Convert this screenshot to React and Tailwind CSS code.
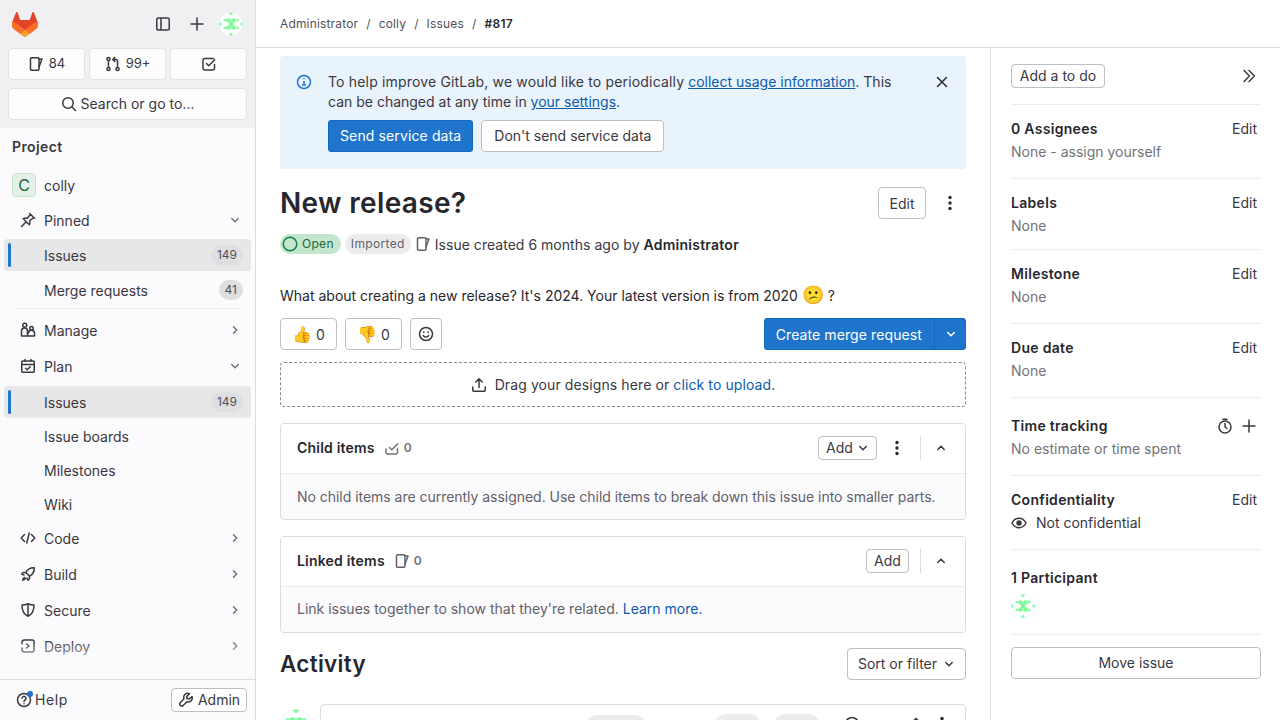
import React from 'react';

const Ico = ({ size = 16, vb = 16, className = '', children }) => (
  <svg width={size} height={size} viewBox={`0 0 ${vb} ${vb}`} fill="none" stroke="currentColor" strokeWidth="1.5" strokeLinecap="round" strokeLinejoin="round" className={`shrink-0 ${className}`}>
    {children}
  </svg>
);

const IssuesIcon = (p) => (
  <Ico {...p}>
    <path d="M3.500 1.750h6.500a1 1 0 0 1 1 1v10.500a1 1 0 0 1-1 1H3.500a1 1 0 0 1-1-1V2.750a1 1 0 0 1 1-1z" />
    <path d="M11 3h3l-3 8" />
  </Ico>
);
const MergeIcon = (p) => (
  <Ico {...p}>
    <circle cx="3.500" cy="3" r="1.600" />
    <circle cx="3.500" cy="13" r="1.600" />
    <circle cx="12.500" cy="13" r="1.600" />
    <path d="M3.500 4.600v6.800M12.500 11.400V5.500a2 2 0 0 0-2-2H8M9.800 1.500 7.800 3.500l2 2" />
  </Ico>
);
const TodoIcon = (p) => (
  <Ico {...p}>
    <path d="M13.500 8.500v4a1.500 1.500 0 0 1-1.500 1.500H3.500A1.500 1.500 0 0 1 2 12.500V4a1.500 1.500 0 0 1 1.500-1.500h9" />
    <path d="m5.500 7.500 2.200 2.200 6-6" />
  </Ico>
);
const SearchIcon = (p) => (
  <Ico {...p}>
    <circle cx="7" cy="7" r="5.250" />
    <path d="m11 11 3.500 3.500" />
  </Ico>
);
const PlusIcon = (p) => (
  <Ico {...p}>
    <path d="M8 2v12M2 8h12" />
  </Ico>
);
const PanelIcon = (p) => (
  <Ico {...p}>
    <rect x="1.750" y="2" width="12.500" height="12" rx="1.750" />
    <path d="M6 2.500v11" />
  </Ico>
);
const ChevronDown = (p) => (
  <Ico size={12} vb={12} {...p}>
    <path d="M2.750 4.500 6 7.750 9.250 4.500" />
  </Ico>
);
const ChevronRight = (p) => (
  <Ico size={12} vb={12} {...p}>
    <path d="M4.500 2.750 7.750 6 4.500 9.250" />
  </Ico>
);
const ChevronUp = (p) => (
  <Ico size={12} vb={12} {...p}>
    <path d="M2.750 7.500 6 4.250 9.250 7.500" />
  </Ico>
);
const Dots = ({ className = '' }) => (
  <svg width="16" height="16" viewBox="0 0 16 16" fill="currentColor" className={`shrink-0 ${className}`}>
    <circle cx="8" cy="2.500" r="1.700" />
    <circle cx="8" cy="8" r="1.700" />
    <circle cx="8" cy="13.500" r="1.700" />
  </svg>
);

const Tanuki = () => (
  <svg width="26" height="25" viewBox="0 0 25 24">
    <path d="m24.507 9.500-.034-.09L21.082.562a.896.896 0 0 0-1.694.091l-2.290 7.010H7.825L5.535.653a.898.898 0 0 0-1.694-.09L.451 9.411.416 9.500a6.297 6.297 0 0 0 2.090 7.278l.012.010.03.022 5.160 3.867 2.560 1.935 1.554 1.176a1.051 1.051 0 0 0 1.268 0l1.555-1.176 2.560-1.935 5.197-3.890.014-.01A6.297 6.297 0 0 0 24.507 9.500z" fill="#E24329" />
    <path d="m24.507 9.500-.034-.09a11.440 11.440 0 0 0-4.560 2.051l-7.447 5.632 4.742 3.584 5.197-3.890.014-.01A6.297 6.297 0 0 0 24.507 9.500z" fill="#FC6D26" />
    <path d="m7.707 20.677 2.560 1.935 1.555 1.176a1.051 1.051 0 0 0 1.268 0l1.555-1.176 2.560-1.935-4.743-3.584-4.755 3.584z" fill="#FCA326" />
    <path d="M5.010 11.461a11.430 11.430 0 0 0-4.560-2.050L.416 9.500a6.297 6.297 0 0 0 2.090 7.278l.012.010.03.022 5.160 3.867 4.745-3.584-7.444-5.632z" fill="#FC6D26" />
  </svg>
);

// 5 dots in the middle, small triangles round the edge
const Identicon = ({ size = 24 }) => (
  <svg width={size} height={size} viewBox="0 0 24 24" className="shrink-0 rounded-full bg-white">
    <circle cx="12" cy="12" r="11.800" fill="#fff" stroke="#e6e6e9" strokeWidth=".4" />
    <g fill="#7dfa9b">
      <circle cx="9.500" cy="8.500" r="2.300" />
      <circle cx="14.500" cy="8.500" r="2.300" />
      <circle cx="12" cy="12" r="2.300" />
      <circle cx="9.500" cy="15.500" r="2.300" />
      <circle cx="14.500" cy="15.500" r="2.300" />
      <path d="M9.500.500h5L12 3.500zM9.500 23.500h5L12 20.500zM.500 9.500l2.500 2.500-2.500 2.500zM23.500 9.500 21 12l2.500 2.500zM4 7h3.500L6 10zM16.500 7H20l-2 3zM4 17h3.500L6 14zM16.500 17H20l-2-3z" />
    </g>
  </svg>
);

const NavRow = ({ icon, label, chevron, count, active, className = '' }) => (
  <div className={`relative mx-1 flex h-8 items-center rounded-[4px] pr-2 text-[14px] text-[#3a383f] ${active ? 'bg-[#e7e6e9]' : ''} ${className}`}>
    {active && <span className="absolute left-1 top-1 h-6 w-[3px] rounded-sm bg-[#1f75cb]" />}
    <span className="flex w-10 justify-center pl-[8px] text-[#3a383f]">{icon}</span>
    <span className="flex-1 truncate">{label}</span>
    {count && <span className="flex h-5 items-center rounded-full bg-[#dfdfe2] px-[6px] text-[12px] text-[#535158]">{count}</span>}
    {chevron === 'down' && <ChevronDown className="mr-[2px] text-[#737278]" />}
    {chevron === 'right' && <ChevronRight className="mr-[2px] text-[#737278]" />}
  </div>
);

const Btn = ({ children, className = '' }) => (
  <div className={`flex items-center justify-center rounded-[4px] border border-[#bfbfc3] bg-white text-[14px] text-[#3a383f] ${className}`}>{children}</div>
);

const SideSection = ({ title, action = 'Edit', children, className = '' }) => (
  <div className={`border-b border-[#ececef] ${className}`}>
    <div className="flex items-center justify-between">
      <span className="text-[14px] font-semibold leading-5 tracking-[0.3px] text-[#28272d]">{title}</span>
      {typeof action === 'string' ? <span className="pr-1 text-[14px] leading-5 text-[#3a383f]">{action}</span> : action}
    </div>
    <div className="mt-[3px] text-[14px] leading-5 text-[#737278]">{children}</div>
  </div>
);

const Sidebar = () => (
  <aside className="relative flex h-screen w-[256px] shrink-0 flex-col overflow-hidden border-r border-[#dcdcde] bg-[#fbfafd]">
    <div className="h-[128px] shrink-0 bg-[#f0f0f2] px-2">
      <div className="flex h-12 items-center">
        <div className="ml-[4px] flex-1"><Tanuki /></div>
        <PanelIcon className="mr-[18px] text-[#3a383f]" />
        <PlusIcon className="mr-[14px] text-[#3a383f]" />
        <Identicon />
        <span className="w-1" />
      </div>
      <div className="grid grid-cols-3 gap-1">
        <div className="flex h-8 items-center justify-center gap-[5px] rounded-[4px] border border-[#e3e3e6] bg-[#fdfdfe] text-[13px] text-[#3a383f]"><IssuesIcon />84</div>
        <div className="flex h-8 items-center justify-center gap-[5px] rounded-[4px] border border-[#e3e3e6] bg-[#fdfdfe] text-[13px] text-[#3a383f]"><MergeIcon />99+</div>
        <div className="flex h-8 items-center justify-center rounded-[4px] border border-[#e3e3e6] bg-[#fdfdfe] text-[#3a383f]"><TodoIcon /></div>
      </div>
      <div className="mt-2 flex h-8 items-center justify-center gap-[4px] rounded-[4px] border border-[#e3e3e6] bg-[#fdfdfe] pb-[1px] text-[14px] text-[#3a383f]"><SearchIcon />Search or go to…</div>
    </div>
    <nav className="flex-1">
      <div className="flex h-[37px] items-center px-3 text-[14px] font-semibold tracking-[0.4px] text-[#3a383f]">Project</div>
      <div className="mt-1 flex h-8 items-center text-[14px] text-[#3a383f]">
        <span className="ml-3 mr-2 flex h-6 w-6 items-center justify-center rounded-[4px] border border-[#c9e5d2] bg-[#e3f1e8] text-[16px] text-[#24663b]">C</span>colly
      </div>
      <NavRow className="mt-[3px]" label="Pinned" chevron="down" icon={<Ico><path d="m9.750 1.500 4.750 4.750M10.500 2.250 7.250 6.250C5.500 5.750 4.250 6 3.250 6.750l6 6c.750-1 1-2.250.500-4l4-3.250M6 10l-4.500 4.500" /></Ico>} />
      <NavRow className="mt-[3px]" label="Issues" count="149" active />
      <NavRow className="mt-[3px]" label="Merge requests" count="41" />
      <div className="mx-4 mt-[2px] h-px bg-[#ececef]" />
      <NavRow className="mt-[5px]" label="Manage" chevron="right" icon={<Ico><circle cx="4.750" cy="3.250" r="2" /><path d="M1.500 14V9a3 3 0 0 1 6 0v5zM7.500 14h7v-2.500a3 3 0 0 0-6-.500" /><circle cx="11.500" cy="6.250" r="1.750" /></Ico>} />
      <NavRow className="mt-1" label="Plan" chevron="down" icon={<Ico><rect x="1.750" y="3" width="12.500" height="11.250" rx="1" /><path d="M1.750 6.500h12.500M5 1.500V3M11 1.500V3M5.500 10.250l1.750 1.500 3-3" /></Ico>} />
      <NavRow className="mt-1" label="Issues" count="149" active />
      <NavRow className="mt-[2px]" label="Issue boards" />
      <NavRow className="mt-[2px]" label="Milestones" />
      <NavRow className="mt-[2px]" label="Wiki" />
      <NavRow className="mt-[2px]" label="Code" chevron="right" icon={<Ico><path d="M4.500 4.500 1.250 8l3.250 3.500M11.500 4.500 14.750 8l-3.250 3.500M9.250 3l-2.500 10" /></Ico>} />
      <NavRow className="mt-1" label="Build" chevron="right" icon={<Ico><path d="M14.250 1.750c-4-.250-6.500 1.250-8.500 4.750l3.750 3.750c3.500-2 5-4.500 4.750-8.500zM5.750 6.500H3.250L1.750 8l2.250 1M9.500 10.250v2.500L8 14.250 7 12M4.500 11.500c-1 .500-1.500 1.500-1.750 2.750 1.250-.250 2.250-.750 2.750-1.750" /></Ico>} />
      <NavRow className="mt-1" label="Secure" chevron="right" icon={<Ico><path d="M8 1.750c2 1 4 1.250 6 1.250 0 5.500-1.500 9.250-6 11.250C3.500 12.250 2 8.500 2 3c2 0 4-.250 6-1.250zM8 2v12" /></Ico>} />
      <NavRow className="mt-1" label="Deploy" chevron="right" icon={<Ico><path d="M2 6V4.500A2.500 2.500 0 0 1 4.500 2h8a1.500 1.500 0 0 1 1.500 1.500v9a1.500 1.500 0 0 1-1.500 1.500h-8A2.500 2.500 0 0 1 2 11.500V10M6.500 6 9 8l-2.500 2" /></Ico>} />
      <NavRow className="mt-1" label="Operate" chevron="right" icon={<Ico><circle cx="8" cy="8" r="6.250" /></Ico>} />
    </nav>
    <div className="pointer-events-none absolute bottom-[40px] left-0 h-[40px] w-full bg-gradient-to-t from-[#fbfafd] from-20% to-transparent" />
    <div className="absolute bottom-0 left-0 flex h-[41px] w-full items-center justify-between border-t border-[#dcdcde] bg-[#fbfafd] pl-4 pr-2">
      <div className="flex items-center gap-[3px] pb-[1px] text-[14px] tracking-[0.6px] text-[#3a383f]">
        <span className="relative">
          <Ico><circle cx="8" cy="8" r="6.500" /><path d="M6 6.250a2 2 0 1 1 3 1.750c-.700.400-1 .800-1 1.500M8 11.750v.010" /></Ico>
          <span className="absolute -right-[1px] -top-[1px] h-[6px] w-[6px] rounded-full bg-[#1f75cb]" />
        </span>
        Help
      </div>
      <Btn className="h-6 w-[76px] gap-1 pb-[1px]"><Ico><path d="M14 4.500 11.250 7 9 6.750 8.750 4.500 11.500 1.750A4 4 0 0 0 6 6.750L2 11a2 2 0 0 0 2.750 2.750L9 9.750a4 4 0 0 0 5-5.250z" /></Ico>Admin</Btn>
    </div>
  </aside>
);

const Card = ({ title, icon, actions, bodyClass = '', children }) => (
  <div className="overflow-hidden rounded-[4px] border border-[#dcdcde]">
    <div className="flex h-[49px] items-center bg-white pb-[2px] pl-4 pr-[18px]">
      <span className="text-[14px] font-semibold tracking-[0.2px] text-[#28272d]">{title}</span>
      <span className="ml-[9px] flex items-center gap-1 text-[12px] font-semibold text-[#737278]">{icon}0</span>
      <div className="ml-auto flex items-center">{actions}</div>
    </div>
    <div className={`flex h-[46px] items-center border-t border-[#ececef] bg-[#fbfafd] pl-4 text-[14px] text-[#626168] ${bodyClass}`}>{children}</div>
  </div>
);

const Main = () => (
  <main className="h-screen flex-1 overflow-hidden">
    <div className="flex h-12 items-center gap-2 border-b border-[#dcdcde] pl-6 text-[12px] tracking-[0.16px] text-[#535158]">
      <span>Administrator</span><span>/</span><span>colly</span><span>/</span><span>Issues</span><span>/</span><span className="font-semibold tracking-[0.3px] text-[#28272d]">#817</span>
    </div>
    <div className="flex">
      <div className="w-[734px] shrink-0 px-6 pt-2">
        <div className="flex h-[113px] rounded-[4px] bg-[#e9f3fc] pl-4 pr-4 pt-[16px]">
          <Ico className="mt-[2px] text-[#1f75cb]"><circle cx="8" cy="8" r="6.500" /><path d="M8 7.500V11M6.750 11h2.500M8 4.750v.010" /></Ico>
          <div className="ml-4 w-[580px] text-[14px] leading-5 text-[#3a383f]">
            <p><span className="tracking-[0.17px]">To help improve GitLab, we would like to periodically</span> <span className="text-[#0b5cad] underline">collect usage information</span>. This</p>
            <p>can be changed at any time in <span className="text-[#0b5cad] underline">your settings</span>.</p>
            <div className="mt-[8px] flex gap-2">
              <div className="flex h-8 items-center rounded-[4px] bg-[#1f75cb] px-3 tracking-[0.12px] text-white shadow-[inset_0_0_0_1px_#1068bf]">Send service data</div>
              <Btn className="h-8 px-3">Don't send service data</Btn>
            </div>
          </div>
          <Ico className="ml-auto mt-[2px] text-[#28272d]"><path d="m3.500 3.500 9 9M12.500 3.500l-9 9" /></Ico>
        </div>

        <div className="mt-[18px] flex h-8 items-center">
          <h1 className="flex-1 text-[28px] font-semibold leading-8 tracking-[0.33px] text-[#28272d]">New release?</h1>
          <Btn className="h-8 w-12">Edit</Btn>
          <Dots className="ml-4 mr-[8px] text-[#28272d]" />
        </div>

        <div className="mt-[15px] flex h-5 items-center text-[14px] text-[#3a383f]">
          <span className="flex h-5 items-center gap-1 rounded-full bg-[#c3e6cd] pl-[2px] pr-[7px] text-[12px] tracking-[0.3px] text-[#24663b]">
            <svg width="16" height="16" viewBox="0 0 16 16" fill="none" stroke="#108548" strokeWidth="1.500"><circle cx="8" cy="8" r="6.750" /></svg>
            Open
          </span>
          <span className="ml-1 flex h-5 items-center rounded-full bg-[#ececef] px-[6px] text-[12px] tracking-[0.35px] text-[#626168]">Imported</span>
          <IssuesIcon className="ml-1 text-[#626168]" />
          <span className="ml-1 tracking-[0.03px]">Issue created 6 months ago by <b className="font-semibold tracking-[0.25px] text-[#28272d]">Administrator</b></span>
        </div>

        <p className="mt-[29px] flex h-6 items-center text-[14px] text-[#28272d]">What about creating a new release? It's 2024. Your latest version is from 2020&nbsp;<span className="text-[18px] leading-none">😕</span>&nbsp;?</p>

        <div className="mt-[11px] flex h-8 items-center">
          <Btn className="h-8 w-[57px] gap-1 text-[14px]"><span className="text-[16px] leading-none">👍</span>0</Btn>
          <Btn className="ml-2 h-8 w-[57px] gap-1"><span className="text-[16px] leading-none">👎</span>0</Btn>
          <Btn className="ml-2 h-8 w-8"><Ico><circle cx="8" cy="8" r="6.500" /><path d="M5.250 9.500c.500 1 1.500 1.500 2.750 1.500s2.250-.500 2.750-1.500M5.750 6v.500M10.250 6v.500" /></Ico></Btn>
          <div className="ml-auto flex h-8 overflow-hidden rounded-[4px] bg-[#1f75cb] text-[14px] tracking-[0.1px] text-white shadow-[inset_0_0_0_1px_#1068bf]">
            <span className="flex items-center px-3">Create merge request</span>
            <span className="flex w-8 items-center justify-center border-l border-[#1068bf]"><ChevronDown /></span>
          </div>
        </div>

        <div className="mt-3 flex h-[45px] items-center justify-center gap-2 rounded-[4px] border border-dashed border-[#89888d] text-[14px] text-[#3a383f]">
          <Ico><path d="M8 10.500V2M4.750 5 8 1.750 11.250 5M1.750 10v3a1.250 1.250 0 0 0 1.250 1.250h10A1.250 1.250 0 0 0 14.250 13v-3" /></Ico>
          <span className="tracking-[0.1px]">Drag your designs here or <span className="text-[#0b5cad]">click to upload</span>.</span>
        </div>

        <div className="mt-4">
          <Card
            title="Child items"
            icon={<Ico><path d="M13.500 8.500v4a1.500 1.500 0 0 1-1.500 1.500H3.500A1.500 1.500 0 0 1 2 12.500V9M5.500 7.500l2.200 2.200 6-6" /></Ico>}
            actions={
              <>
                <Btn className="h-6 w-[59px] gap-1">Add<ChevronDown /></Btn>
                <Dots className="ml-3 text-[#28272d]" />
                <span className="ml-[15px] h-6 w-px bg-[#dcdcde]" />
                <ChevronUp className="ml-[14px] text-[#3a383f]" />
              </>
            }
          >
            <span className="tracking-[-0.03px]">No child items are currently assigned. Use child items to break down this issue into smaller parts.</span>
          </Card>
        </div>
        <div className="mt-4">
          <Card
            title="Linked items"
            icon={<IssuesIcon className="text-[#626168]" />}
            bodyClass="pb-[2px]"
            actions={
              <>
                <Btn className="h-6 w-[43px]">Add</Btn>
                <span className="ml-[11px] h-6 w-px bg-[#dcdcde]" />
                <ChevronUp className="ml-[14px] text-[#3a383f]" />
              </>
            }
          >
            <span>Link issues together to show that they're related. <span className="text-[#0b5cad]">Learn more.</span></span>
          </Card>
        </div>

        <div className="mt-[15px] flex h-8 items-center justify-between">
          <h2 className="text-[22.400px] font-semibold tracking-[0.33px] text-[#28272d]">Activity</h2>
          <Btn className="h-8 w-[119px] gap-[6px] pb-[1px]">Sort or filter<ChevronDown /></Btn>
        </div>

        <div className="mt-6 flex">
          <span className="mt-[5px]"><Identicon size={32} /></span>
          <div className="ml-2 h-16 flex-1 rounded-[4px] border border-[#dcdcde] pl-4 pr-4">
            <div className="relative flex h-full pt-[10px] text-[14px]">
              <b className="font-semibold text-[#28272d]">Administrator</b>
              <span className="ml-[56px] text-[#626168]">6 months ago</span>
              <span className="absolute left-[248px] top-[10px] h-6 w-[62px] rounded-full bg-[#ececef]" />
              <span className="absolute left-[377px] top-[9px] h-6 w-[47px] rounded-full bg-[#ececef]" />
              <span className="absolute left-[436px] top-[9px] h-6 w-[47px] rounded-full bg-[#ececef]" />
              <Ico className="absolute left-[507px] top-[11px] text-[#3a383f]"><circle cx="8" cy="8" r="6.500" /></Ico>
              <Ico className="absolute left-[569px] top-[11px] text-[#3a383f]"><path d="M10 2.500 13.500 6 6 13.500H2.500V10z" /></Ico>
              <Dots className="absolute left-[597px] top-[11px] text-[#28272d]" />
            </div>
          </div>
        </div>
      </div>

      <aside className="w-[290px] shrink-0 border-l border-[#dcdcde] pl-5 pr-[19px]">
        <div className="flex h-[57px] items-center justify-between border-b border-[#ececef]">
          <Btn className="h-6 w-[94px] pb-[1px]">Add a to do</Btn>
          <Ico className="mr-1 text-[#3a383f]"><path d="m3 2.500 5.500 5.500L3 13.500M8 2.500l5.500 5.500L8 13.500" /></Ico>
        </div>
        <SideSection className="h-[74px] pt-[14px]" title="0 Assignees">None - assign yourself</SideSection>
        <SideSection className="h-[71px] pt-[14px]" title="Labels">None</SideSection>
        <SideSection className="h-[74px] pt-[14px]" title="Milestone">None</SideSection>
        <SideSection className="h-[74px] pt-[14px]" title="Due date">None</SideSection>
        <SideSection
          className="h-[78px] pt-[18px]"
          title="Time tracking"
          action={
            <span className="flex items-center gap-2 pr-1 text-[#3a383f]">
              <Ico><circle cx="8" cy="9" r="6" /><path d="M6 1.250h4M8 9V5.500M8 9l2 1.500" /></Ico>
              <PlusIcon />
            </span>
          }
        >
          No estimate or time spent
        </SideSection>
        <SideSection className="h-[74px] pt-[14px]" title="Confidentiality">
          <span className="flex items-center gap-[9px] text-[#3a383f]">
            <Ico><path d="M1 8s2.500-4.750 7-4.750S15 8 15 8s-2.500 4.750-7 4.750S1 8 1 8z" /><circle cx="8" cy="8" r="2" fill="currentColor" /></Ico>
            Not confidential
          </span>
        </SideSection>
        <div className="h-[85px] border-b border-[#ececef] pt-[18px]">
          <div className="text-[14px] font-semibold leading-5 tracking-[0.3px] text-[#28272d]">1 Participant</div>
          <div className="mt-[6px]"><Identicon /></div>
        </div>
        <Btn className="mt-3 h-8 pb-[1px]">Move issue</Btn>
      </aside>
    </div>
  </main>
);

export default function App() {
  return (
    <div className="flex h-screen overflow-hidden bg-white font-['Inter',sans-serif]">
      <Sidebar />
      <Main />
    </div>
  );
}
